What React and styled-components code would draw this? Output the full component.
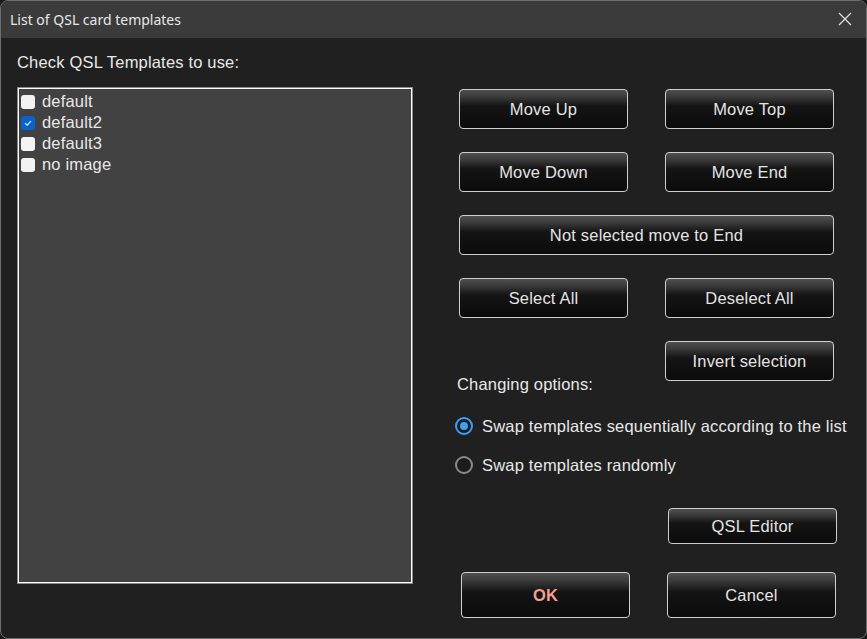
import React from "react";
import styled, { createGlobalStyle } from "styled-components";

const Global = createGlobalStyle`
  html, body { margin: 0; padding: 0; background: #1a1a1a; }
  body { width: 867px; height: 639px; overflow: hidden; }
  * { box-sizing: border-box; }
`;

const Window = styled.div`
  width: 867px;
  height: 639px;
  background: #202020;
  border: 1px solid #6e6e6e;
  border-radius: 8px;
  overflow: hidden;
  display: flex;
  flex-direction: column;
  font-family: "Liberation Sans", Arial, sans-serif;
  color: #e6e6e6;
`;

const TitleBar = styled.div`
  height: 37px;
  flex: none;
  background: #3b3b3b;
  display: flex;
  align-items: center;
  justify-content: space-between;
  padding: 0 14px 0 9px;
`;

const Title = styled.div`
  font-family: "Noto Sans", "Open Sans", sans-serif;
  font-size: 14px;
  color: #e8e8e8;
  padding-bottom: 1px;
`;

const CloseBtn = styled.div`
  width: 14px;
  height: 14px;
  display: flex;
  margin-top: -1px;
`;

const Body = styled.div`
  flex: 1;
  display: flex;
  padding: 0 0 0 16px;
`;

const LeftCol = styled.div`
  width: 396px;
  display: flex;
  flex-direction: column;
  padding-top: 15px;
`;

const Label = styled.div`
  font-size: 16.5px;
  letter-spacing: 0.18px;
  line-height: 18px;
  color: #e8e8e8;
  white-space: nowrap;
`;

const ListBox = styled.div`
  margin-top: 17px;
  margin-left: 1px;
  width: 394px;
  height: 495px;
  background: #424242;
  border: 1px solid #ffffff;
  box-shadow: 0 0 0 1px #8a8a8a;
  padding: 2px 0 0 2px;
`;

const Item = styled.label`
  display: flex;
  align-items: center;
  height: 21px;
  font-size: 16.5px;
  letter-spacing: 0.18px;
  color: #e8e8e8;
  gap: 7px;
`;

const Box = styled.span`
  width: 14px;
  height: 14px;
  border-radius: 3px;
  background: ${(p) => (p.$checked ? "#0a63c9" : "#f3f3f3")};
  display: flex;
  align-items: center;
  justify-content: center;
  flex: none;
`;

const RightCol = styled.div`
  margin-left: 42px;
  width: 400px;
  display: flex;
  flex-direction: column;
  padding-top: 51px;
`;

const ButtonGrid = styled.div`
  display: grid;
  grid-template-columns: 169px 169px;
  column-gap: 37px;
  row-gap: 23px;
  grid-auto-rows: 40px;
  padding-left: 4px;
`;

const Button = styled.button`
  font-family: "Liberation Sans", Arial, sans-serif;
  font-size: 16.5px;
  letter-spacing: 0.18px;
  font-weight: ${(p) => (p.$primary ? 700 : 400)};
  color: ${(p) => (p.$primary ? "#f4a08e" : "#e4e4e4")};
  border: 1px solid #cfcfcf;
  border-radius: 4px;
  background: linear-gradient(
    to bottom,
    #505050 0%,
    #3a3a3a 18%,
    #141414 42%,
    #0b0b0b 100%
  );
  height: ${(p) => p.$h || 40}px;
  width: ${(p) => (p.$wide ? "auto" : "169px")};
  padding: 0;
  grid-column: ${(p) => p.$col || "auto"};
  cursor: default;
`;

const OptionsLabel = styled(Label)`
  grid-column: 1;
  grid-row: 5;
  align-self: end;
  margin-left: -2px;
  margin-bottom: -12px;
`;

const RadioGroup = styled.div`
  margin-top: 36px;
  display: flex;
  flex-direction: column;
  gap: 21px;
`;

const RadioRow = styled.label`
  display: flex;
  align-items: center;
  gap: 9px;
  height: 18px;
  font-size: 16.5px;
  letter-spacing: 0.18px;
  color: #e8e8e8;
  white-space: nowrap;
`;

const RadioCircle = styled.span`
  width: 18px;
  height: 18px;
  border-radius: 50%;
  flex: none;
  border: 2px solid ${(p) => (p.$on ? "#3aa0f8" : "#8a8a8a")};
  background: #1c1c1c;
  display: flex;
  align-items: center;
  justify-content: center;
  &::after {
    content: "";
    width: 8px;
    height: 8px;
    border-radius: 50%;
    background: ${(p) => (p.$on ? "#3aa0f8" : "transparent")};
  }
`;

const EditorRow = styled.div`
  margin-top: 34px;
  display: flex;
  justify-content: flex-end;
  padding-right: 18px;
`;

const BottomRow = styled.div`
  margin-top: 28px;
  display: flex;
  gap: 37px;
  padding-left: 6px;
`;

const templates = [
  { name: "default", checked: false },
  { name: "default2", checked: true },
  { name: "default3", checked: false },
  { name: "no image", checked: false },
];

export default function App() {
  return (
    <>
      <Global />
      <Window>
        <TitleBar>
          <Title>List of QSL card templates</Title>
          <CloseBtn>
            <svg width="14" height="14" viewBox="0 0 14 14">
              <path d="M1 1 L13 13 M13 1 L1 13" stroke="#e0e0e0" strokeWidth="1.2" />
            </svg>
          </CloseBtn>
        </TitleBar>
        <Body>
          <LeftCol>
            <Label>Check QSL Templates to use:</Label>
            <ListBox>
              {templates.map((t) => (
                <Item key={t.name}>
                  <Box $checked={t.checked}>
                    {t.checked && (
                      <svg width="10" height="10" viewBox="0 0 10 10">
                        <path d="M2 5.2 L4.2 7.2 L8 3" fill="none" stroke="#fff" strokeWidth="1.1" />
                      </svg>
                    )}
                  </Box>
                  {t.name}
                </Item>
              ))}
            </ListBox>
          </LeftCol>
          <RightCol>
            <ButtonGrid>
              <Button>Move Up</Button>
              <Button>Move Top</Button>
              <Button>Move Down</Button>
              <Button>Move End</Button>
              <Button $col="1 / span 2" $wide>
                Not selected move to End
              </Button>
              <Button>Select All</Button>
              <Button>Deselect All</Button>
              <OptionsLabel>Changing options:</OptionsLabel>
              <Button $col="2">Invert selection</Button>
            </ButtonGrid>
            <RadioGroup>
              <RadioRow>
                <RadioCircle $on />
                Swap templates sequentially according to the list
              </RadioRow>
              <RadioRow>
                <RadioCircle />
                Swap templates randomly
              </RadioRow>
            </RadioGroup>
            <EditorRow>
              <Button $h={36}>QSL Editor</Button>
            </EditorRow>
            <BottomRow>
              <Button $h={46} $primary>OK</Button>
              <Button $h={46}>Cancel</Button>
            </BottomRow>
          </RightCol>
        </Body>
      </Window>
    </>
  );
}
